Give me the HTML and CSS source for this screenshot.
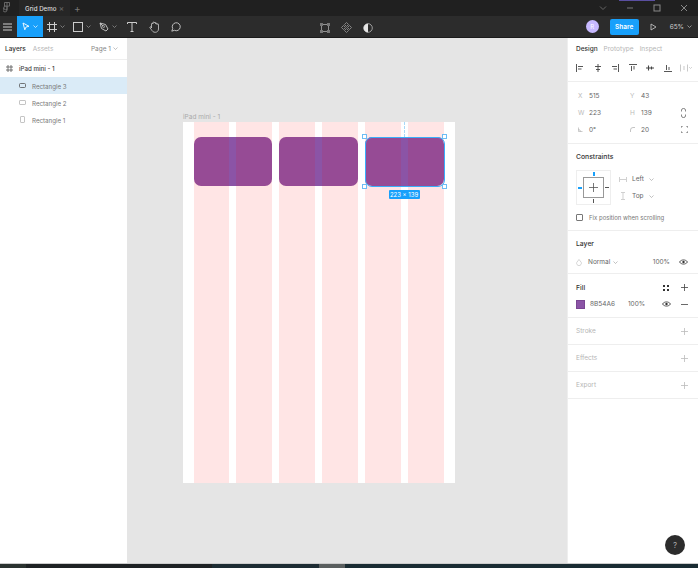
FILE: index.html
```html
<!DOCTYPE html>
<html lang="en">
<head>
    <meta charset="UTF-8" />
    <title>Grid Demo</title>
    <link rel="stylesheet" href="styles.css">
</head>
<body>
<div class="app">
    <div class="titlebar">
        <svg class="figma-mark" width="8" height="12" viewBox="0 0 8 12"><path d="M1.500 .5h5v3.600h-5zM4 .5v7.500a2 2 0 1 1-2.500-2M4 4.100v3.600H2.500A1.800 1.800 0 0 1 2.500 4.100" fill="none" stroke="#777" stroke-width=".8"/></svg>
        <div class="tab"><span>Grid Demo</span><span class="tab-x">×</span></div>
        <span class="tab-plus">+</span>
        <div class="window-btns">
            <svg width="8" height="6" viewBox="0 0 8 6"><path d="M1 1.500l3 3 3-3" fill="none" stroke="#666"/></svg>
            <svg width="8" height="6" viewBox="0 0 8 6"><path d="M1 3h6" stroke="#777"/></svg>
            <svg width="8" height="8" viewBox="0 0 8 8"><rect x="1" y="1" width="6" height="6" fill="none" stroke="#888"/></svg>
            <svg width="8" height="8" viewBox="0 0 8 8"><path d="M1 1l6 6M7 1l-6 6" stroke="#888"/></svg>
        </div>
        <div class="window-accent"></div>
    </div>

    <div class="toolbar">
        <svg class="menu-icon" width="9" height="8" viewBox="0 0 9 8"><path d="M0 1h9M0 4h9M0 7h9" stroke="#ccc"/></svg>
        <div class="tool tool-active">
            <svg width="8" height="9" viewBox="0 0 8 9"><path d="M1 1l6 3.300-3 .7-1.200 2.800z" fill="none" stroke="#fff" stroke-width=".9"/></svg>
            <svg class="caret" width="5" height="3" viewBox="0 0 5 3"><path d="M.5 .5l2 2 2-2" fill="none" stroke="#fff" stroke-width=".7"/></svg>
        </div>
        <div class="tool">
            <svg width="10" height="10" viewBox="0 0 10 10"><path d="M2.500 0v10M7.500 0v10M0 2.500h10M0 7.500h10" stroke="#ccc"/></svg>
            <svg class="caret" width="5" height="3" viewBox="0 0 5 3"><path d="M.5 .5l2 2 2-2" fill="none" stroke="#999" stroke-width=".7"/></svg>
        </div>
        <div class="tool">
            <svg width="10" height="10" viewBox="0 0 10 10"><rect x=".5" y=".5" width="9" height="9" fill="none" stroke="#ccc"/></svg>
            <svg class="caret" width="5" height="3" viewBox="0 0 5 3"><path d="M.5 .5l2 2 2-2" fill="none" stroke="#999" stroke-width=".7"/></svg>
        </div>
        <div class="tool">
            <svg width="10" height="10" viewBox="0 0 10 10"><path d="M1 1l5.500 1.500L9 7 7 9 2.500 6.500zM1 1l3 3" fill="none" stroke="#ccc" stroke-width=".9"/><circle cx="4.600" cy="4.600" r="1" fill="none" stroke="#ccc" stroke-width=".7"/></svg>
            <svg class="caret" width="5" height="3" viewBox="0 0 5 3"><path d="M.5 .5l2 2 2-2" fill="none" stroke="#999" stroke-width=".7"/></svg>
        </div>
        <div class="tool tool-single">
            <svg width="10" height="10" viewBox="0 0 10 10"><path d="M.5 2V.5h9V2M5 .5v9M3.500 9.500h3" fill="none" stroke="#ccc"/></svg>
        </div>
        <div class="tool tool-single">
            <svg width="11" height="12" viewBox="0 0 11 12"><path d="M2.500 7V3a.7.7 0 0 1 1.400 0V1.800a.7.7 0 0 1 1.400 0V2a.7.7 0 0 1 1.400 0v1a.7.7 0 0 1 1.400 0V3.500a.7.7 0 0 1 1.400 0V8c0 2-1.500 3.300-3.300 3.300-2 0-2.800-1-3.700-2.500L.9 6.800c-.4-.8.600-1.400 1.100-.8z" fill="none" stroke="#ccc" stroke-width=".8"/></svg>
        </div>
        <div class="tool tool-single">
            <svg width="10" height="10" viewBox="0 0 10 10"><path d="M.8 9.200l.9-2.600A4 4 0 1 1 3.400 8.300z" fill="none" stroke="#ccc" stroke-width=".9"/></svg>
        </div>
        <div class="center-tools">
            <svg width="10" height="10" viewBox="0 0 10 10"><rect x="1.500" y="1.500" width="7" height="7" fill="none" stroke="#aaa" stroke-width=".8"/><path d="M0 0h3v3H0zM7 0h3v3H7zM0 7h3v3H0zM7 7h3v3H7z" fill="#777"/></svg>
            <svg width="11" height="11" viewBox="0 0 11 11"><path d="M5.500 .5l2 2-2 2-2-2zM5.500 6.500l2 2-2 2-2-2zM2.500 3.500l2 2-2 2-2-2zM8.500 3.500l2 2-2 2-2-2z" fill="none" stroke="#999" stroke-width=".8"/></svg>
            <svg width="10" height="10" viewBox="0 0 10 10"><circle cx="5" cy="5" r="4.300" fill="none" stroke="#bbb" stroke-width=".8"/><path d="M5 .7a4.300 4.300 0 0 0 0 8.600z" fill="#e6e6e6"/></svg>
        </div>
        <div class="right-tools">
            <div class="avatar">R</div>
            <div class="share">Share</div>
            <svg class="play" width="7" height="8" viewBox="0 0 7 8"><path d="M1 1l5 3-5 3z" fill="none" stroke="#ccc" stroke-width=".8"/></svg>
            <div class="zoom-level">65% <svg width="5" height="3" viewBox="0 0 5 3"><path d="M.5 .5l2 2 2-2" fill="none" stroke="#bbb" stroke-width=".7"/></svg></div>
        </div>
    </div>

    <div class="main">
        <div class="left-panel">
            <div class="left-tabs">
                <span class="tab-on">Layers</span>
                <span class="tab-off">Assets</span>
                <span class="page-pick">Page 1 <svg width="5" height="3" viewBox="0 0 5 3"><path d="M.5 .5l2 2 2-2" fill="none" stroke="#999" stroke-width=".6"/></svg></span>
            </div>
            <div class="layer layer-frame">
                <svg width="7" height="7" viewBox="0 0 7 7"><path d="M2 0v7M5 0v7M0 2h7M0 5h7" stroke="#555" stroke-width=".8"/></svg>
                <span>iPad mini - 1</span>
            </div>
            <div class="layer layer-child layer-selected">
                <svg width="7" height="5" viewBox="0 0 7 5"><rect x=".5" y=".5" width="6" height="4" rx="1" fill="none" stroke="#555" stroke-width=".8"/></svg>
                <span>Rectangle 3</span>
            </div>
            <div class="layer layer-child">
                <svg width="7" height="5" viewBox="0 0 7 5"><rect x=".5" y=".5" width="6" height="4" rx=".6" fill="none" stroke="#aaa" stroke-width=".7"/></svg>
                <span>Rectangle 2</span>
            </div>
            <div class="layer layer-child">
                <svg width="7" height="7" viewBox="0 0 7 7"><rect x="1.500" y=".5" width="4" height="6" rx=".6" fill="none" stroke="#aaa" stroke-width=".7"/></svg>
                <span>Rectangle 1</span>
            </div>
        </div>

        <div class="canvas">
            <div class="frame-label">iPad mini - 1</div>
            <div class="frame">
                <div class="rects">
                    <div class="rect"></div>
                    <div class="rect"></div>
                    <div class="rect"></div>
                </div>
                <div class="columns">
                    <div class="col"></div><div class="col"></div><div class="col"></div>
                    <div class="col"></div><div class="col"></div><div class="col"></div>
                </div>
                <div class="guide"></div>
                <div class="selection">
                    <i class="handle h-tl"></i><i class="handle h-tr"></i>
                    <i class="handle h-bl"></i><i class="handle h-br"></i>
                    <div class="size-badge">223 × 139</div>
                </div>
            </div>
            <div class="help">?</div>
        </div>

        <div class="right-panel">
            <div class="design-head">
                <div class="right-tabs">
                    <span class="tab-on">Design</span>
                    <span class="tab-off">Prototype</span>
                    <span class="tab-off">Inspect</span>
                </div>
                <div class="align-row">
                    <svg width="8" height="8" viewBox="0 0 8 8"><path d="M.5 0v8M2 2.500h5M2 5h3.500" stroke="#444" stroke-width=".9"/></svg>
                    <svg width="8" height="8" viewBox="0 0 8 8"><path d="M4 0v8M1 2.500h6M2 5.500h4" stroke="#444" stroke-width=".9"/></svg>
                    <svg width="8" height="8" viewBox="0 0 8 8"><path d="M7.500 0v8M1 2.500h5M2.500 5H6" stroke="#444" stroke-width=".9"/></svg>
                    <svg width="8" height="8" viewBox="0 0 8 8"><path d="M0 .5h8M2.500 2v5M5 2v3.500" stroke="#444" stroke-width=".9"/></svg>
                    <svg width="8" height="8" viewBox="0 0 8 8"><path d="M0 4h8M2.500 1.500v5M5.500 2.500v3" stroke="#444" stroke-width="1.100"/></svg>
                    <svg width="8" height="8" viewBox="0 0 8 8"><path d="M0 7.500h8M2.500 1v5M5 3v3" stroke="#444" stroke-width=".9"/></svg>
                    <svg class="align-more" width="12" height="8" viewBox="0 0 12 8"><path d="M.5 .5v7M7.500 .5v7M4 2v4" stroke="#bbb" stroke-width=".8"/><path d="M9 3l1.500 1.500L12 3" fill="none" stroke="#bbb" stroke-width=".6"/></svg>
                </div>
            </div>

            <div class="section props">
                <div class="prop"><b>X</b><span>515</span></div>
                <div class="prop"><b>Y</b><span>43</span></div>
                <i></i>
                <div class="prop"><b>W</b><span>223</span></div>
                <div class="prop"><b>H</b><span>139</span></div>
                <svg class="prop-action" width="5" height="10" viewBox="0 0 5 10"><path d="M.5 3.500V2a2 1.500 0 0 1 4 0v1.500M.5 6.500V8a2 1.500 0 0 0 4 0V6.500" fill="none" stroke="#555" stroke-width=".7"/></svg>
                <div class="prop"><b><svg width="5" height="5" viewBox="0 0 5 5"><path d="M.5 .5v4h4M.5 2.500a2 2 0 0 1 2 2" fill="none" stroke="#aaa" stroke-width=".6"/></svg></b><span>0°</span></div>
                <div class="prop"><b><svg width="5" height="5" viewBox="0 0 5 5"><path d="M.5 5V3a2.500 2.500 0 0 1 2.500-2.500h2" fill="none" stroke="#aaa" stroke-width=".7"/></svg></b><span>20</span></div>
                <svg class="prop-action" width="7" height="7" viewBox="0 0 7 7"><path d="M0 2V0h2M5 0h2v2M7 5v2H5M2 7H0V5" fill="none" stroke="#555" stroke-width=".8"/></svg>
            </div>

            <div class="section constraints">
                <div class="section-title">Constraints</div>
                <div class="constraint-body">
                    <div class="constraint-box">
                        <div class="constraint-inner">
                            <svg width="9" height="9" viewBox="0 0 9 9"><path d="M4.500 0v9M0 4.500h9" stroke="#555" stroke-width=".8"/></svg>
                        </div>
                        <i class="pin pin-top"></i><i class="pin pin-left"></i>
                        <i class="pin pin-right"></i><i class="pin pin-bottom"></i>
                    </div>
                    <div class="constraint-picks">
                        <div class="pick">
                            <svg width="8" height="5" viewBox="0 0 8 5"><path d="M.5 0v5M7.500 0v5M1 2.500h6" stroke="#bbb" stroke-width=".7"/></svg>
                            <span>Left</span>
                            <svg width="5" height="3" viewBox="0 0 5 3"><path d="M.5 .5l2 2 2-2" fill="none" stroke="#999" stroke-width=".6"/></svg>
                        </div>
                        <div class="pick">
                            <svg width="8" height="8" viewBox="0 0 8 8"><path d="M2 .5h4M2 7.500h4M4 1v6" stroke="#bbb" stroke-width=".7"/></svg>
                            <span>Top</span>
                            <svg width="5" height="3" viewBox="0 0 5 3"><path d="M.5 .5l2 2 2-2" fill="none" stroke="#999" stroke-width=".6"/></svg>
                        </div>
                    </div>
                </div>
                <div class="fix-row"><i class="checkbox"></i><span>Fix position when scrolling</span></div>
            </div>

            <div class="section layer-sec">
                <div class="section-title">Layer</div>
                <div class="value-row">
                    <svg width="6" height="7" viewBox="0 0 6 7"><path d="M3 .5L5.300 3.500a2.400 2.400 0 1 1-4.600 0z" fill="none" stroke="#bbb" stroke-width=".6"/></svg>
                    <span class="blend">Normal</span>
                    <svg class="blend-caret" width="5" height="3" viewBox="0 0 5 3"><path d="M.5 .5l2 2 2-2" fill="none" stroke="#999" stroke-width=".6"/></svg>
                    <span class="percent">100%</span>
                    <svg class="eye" width="9" height="6" viewBox="0 0 9 6"><path d="M.4 3C2.500 .2 6.500 .2 8.600 3 6.500 5.800 2.500 5.800 .4 3z" fill="none" stroke="#333" stroke-width=".8"/><circle cx="4.500" cy="3" r="1.200" fill="#333"/></svg>
                </div>
            </div>

            <div class="section fill-sec">
                <div class="section-head">
                    <span class="section-title">Fill</span>
                    <svg class="styles-icon" width="6" height="6" viewBox="0 0 6 6"><path d="M0 0h2v2H0zM4 0h2v2H4zM0 4h2v2H0zM4 4h2v2H4z" fill="#333"/></svg>
                    <svg width="7" height="7" viewBox="0 0 7 7"><path d="M3.500 0v7M0 3.500h7" stroke="#444" stroke-width=".8"/></svg>
                </div>
                <div class="value-row">
                    <i class="swatch"></i>
                    <span class="hex">8B54A6</span>
                    <span class="fill-percent">100%</span>
                    <svg class="eye" width="9" height="6" viewBox="0 0 9 6"><path d="M.4 3C2.500 .2 6.500 .2 8.600 3 6.500 5.800 2.500 5.800 .4 3z" fill="none" stroke="#333" stroke-width=".8"/><circle cx="4.500" cy="3" r="1.200" fill="#333"/></svg>
                    <svg width="7" height="7" viewBox="0 0 7 7"><path d="M0 3.500h7" stroke="#444" stroke-width=".8"/></svg>
                </div>
            </div>

            <div class="section empty-sec">
                <span>Stroke</span>
                <svg width="7" height="7" viewBox="0 0 7 7"><path d="M3.500 0v7M0 3.500h7" stroke="#bbb" stroke-width=".8"/></svg>
            </div>
            <div class="section empty-sec">
                <span>Effects</span>
                <svg width="7" height="7" viewBox="0 0 7 7"><path d="M3.500 0v7M0 3.500h7" stroke="#bbb" stroke-width=".8"/></svg>
            </div>
            <div class="section empty-sec">
                <span>Export</span>
                <svg width="7" height="7" viewBox="0 0 7 7"><path d="M3.500 0v7M0 3.500h7" stroke="#bbb" stroke-width=".8"/></svg>
            </div>
        </div>
    </div>

    <div class="taskbar">
        <div class="task task-first"></div>
        <div class="task task-wide"></div>
        <div class="task task-narrow"></div>
        <div class="task task-on"></div>
        <div class="task task-rest"></div>
    </div>
</div>
</body>
</html>
```

FILE: styles.css
```css
body {
    margin: 0;
    font-family: Inter, "Liberation Sans", sans-serif;
    font-size: 6.5px;
    color: #333;
}

.app {
    display: flex;
    flex-direction: column;
    width: 698px;
    height: 568px;
    overflow: hidden;
}

svg {
    display: block;
    flex: none;
}

/* title bar */
.titlebar {
    display: flex;
    align-items: center;
    height: 16px;
    background-color: #202020;
    position: relative;
    color: #ddd;
}

.figma-mark {
    margin-left: 3px;
}

.tab {
    display: flex;
    align-items: center;
    justify-content: space-between;
    box-sizing: border-box;
    width: 51px;
    height: 16px;
    margin-left: 8px;
    padding: 0 6px 0 6px;
    background-color: #262626;
    font-size: 6.2px;
    font-weight: 500;
    white-space: nowrap;
}

.tab-x {
    color: #666;
    font-size: 8px;
}

.tab-plus {
    margin-left: 4px;
    color: #777;
    font-size: 10px;
}

.window-btns {
    display: flex;
    align-items: center;
    gap: 19px;
    margin-left: auto;
    margin-right: 10px;
}

.window-accent {
    position: absolute;
    top: 0;
    left: 619px;
    width: 36px;
    height: 1px;
    background-color: #5a4fa0;
}

/* toolbar */
.toolbar {
    display: flex;
    align-items: center;
    height: 21px;
    background-color: #2c2c2c;
    border-bottom: 1px solid #1b1b1b;
    position: relative;
}

.menu-icon {
    margin: 0 5px 0 3px;
}

.tool {
    display: flex;
    align-items: center;
    justify-content: center;
    gap: 3px;
    width: 26px;
    height: 21px;
}

.tool-single {
    width: 22px;
}

.tool-active {
    background-color: #18a0fb;
}

.center-tools {
    display: flex;
    align-items: center;
    gap: 11px;
    position: absolute;
    left: 320px;
    top: 6px;
}

.right-tools {
    display: flex;
    align-items: center;
    margin-left: auto;
    margin-right: 6px;
}

.avatar {
    width: 13px;
    height: 13px;
    line-height: 13px;
    border-radius: 50%;
    background-color: #c7b9ff;
    color: #fff;
    text-align: center;
    font-size: 6px;
}

.share {
    width: 29px;
    height: 16px;
    line-height: 16px;
    margin-left: 11px;
    border-radius: 2px;
    background-color: #18a0fb;
    color: #fff;
    text-align: center;
    font-weight: 600;
}

.play {
    margin-left: 11px;
}

.zoom-level {
    display: flex;
    align-items: center;
    gap: 3px;
    margin-left: 13px;
    color: #ccc;
}

/* left panel */
.main {
    display: flex;
    flex: 1;
    min-height: 0;
}

.left-panel {
    width: 127px;
    background-color: #fff;
    flex: none;
}

.left-tabs {
    display: flex;
    align-items: center;
    gap: 7px;
    height: 21px;
    padding: 0 9px 0 5px;
    border-bottom: 1px solid #eee;
}

.tab-on {
    color: #333;
    font-weight: 500;
}

.tab-off {
    color: #b5b5b5;
}

.page-pick {
    display: flex;
    align-items: center;
    gap: 2px;
    margin-left: auto;
    color: #888;
}

.layer {
    display: flex;
    align-items: center;
    gap: 6px;
    height: 17px;
    padding-left: 6px;
    font-size: 6.2px;
    color: #777;
}

.layer-child span {
    margin-top: 1px;
}

.layer-frame {
    color: #444;
    font-weight: 500;
}

.layer-child {
    padding-left: 19px;
}

.layer-selected {
    background-color: #daebf7;
}

/* canvas */
.canvas {
    flex: 1;
    background-color: #e5e5e5;
    position: relative;
}

.frame-label {
    position: absolute;
    left: 56px;
    top: 75px;
    color: #aaa;
}

.frame {
    position: absolute;
    left: 56px;
    top: 84px;
    width: 271.5px;
    height: 361px;
    background-color: #fff;
}

.rects {
    position: absolute;
    top: 15px;
    left: 10.5px;
    right: 10.5px;
    display: grid;
    grid-template-columns: repeat(3, 1fr);
    gap: 7px;
}

.rect {
    height: 49px;
    border-radius: 7px;
    background-color: #8b54a6;
}

.columns {
    position: absolute;
    top: 0;
    bottom: 0;
    left: 10.5px;
    right: 10.5px;
    display: flex;
    gap: 7px;
}

.col {
    flex: 1;
    background-color: rgba(255, 0, 0, 0.1);
}

.guide {
    position: absolute;
    left: 221px;
    top: 0;
    height: 15px;
    border-left: 1px dashed #a9d9f8;
}

.selection {
    position: absolute;
    left: 181.5px;
    top: 14.5px;
    width: 80px;
    height: 50px;
    box-sizing: border-box;
    border: 1.5px solid #3aaefb;
    border-radius: 7px;
}

.handle {
    position: absolute;
    width: 5px;
    height: 5px;
    background-color: #fff;
    border: 1px solid #6cbdf5;
    box-sizing: border-box;
}

.h-tl { left: -3.5px; top: -3.5px; }
.h-tr { right: -3.5px; top: -3.5px; }
.h-bl { left: -3.5px; bottom: -3.5px; }
.h-br { right: -3.5px; bottom: -3.5px; }

.size-badge {
    position: absolute;
    left: 23px;
    top: 52px;
    width: 31px;
    height: 9px;
    line-height: 9px;
    border-radius: 1px;
    background-color: #18a0fb;
    color: #fff;
    text-align: center;
    font-size: 6px;
    white-space: nowrap;
}

.help {
    position: absolute;
    left: 538px;
    top: 497px;
    width: 20px;
    height: 20px;
    line-height: 20px;
    border-radius: 50%;
    background-color: #2c2c2c;
    color: #aaa;
    text-align: center;
    font-size: 8px;
    z-index: 2;
}

/* right panel */
.right-panel {
    width: 131px;
    flex: none;
    background-color: #fff;
    border-left: 1px solid #eee;
    box-sizing: border-box;
}

.design-head {
    height: 44px;
    border-bottom: 1px solid #eee;
    box-sizing: border-box;
}

.right-tabs {
    display: flex;
    align-items: center;
    gap: 6px;
    height: 22px;
    padding-left: 8px;
}

.align-row {
    display: flex;
    align-items: center;
    gap: 9.5px;
    height: 16px;
    padding-left: 8px;
}

.align-more {
    margin-left: -1px;
}

.section {
    border-bottom: 1px solid #eee;
    box-sizing: border-box;
}

.section-title {
    color: #333;
    font-weight: 500;
    font-size: 6.8px;
}

.props {
    display: grid;
    grid-template-columns: 52px 46px 1fr;
    grid-auto-rows: 17px;
    align-items: center;
    height: 62px;
    padding: 5px 0 0 10px;
}

.prop {
    display: flex;
    align-items: center;
    gap: 6px;
    color: #666;
}

.prop b {
    width: 5px;
    color: #bbb;
    font-weight: 400;
}

.prop-action {
    margin-left: 5px;
}

.constraints {
    height: 87px;
    padding: 8px 0 0 8px;
}

.constraint-body {
    display: flex;
    margin-top: 9px;
}

.constraint-box {
    position: relative;
    display: flex;
    align-items: center;
    justify-content: center;
    width: 35px;
    height: 35px;
    box-sizing: border-box;
    border: 1px solid #eee;
}

.constraint-inner {
    display: flex;
    align-items: center;
    justify-content: center;
    width: 21px;
    height: 21px;
    box-sizing: border-box;
    border: 1px solid #999;
}

.pin {
    position: absolute;
    background-color: #555;
}

.pin-top { top: 1px; left: 16px; width: 1.5px; height: 4px; background-color: #18a0fb; }
.pin-bottom { bottom: 1px; left: 16px; width: 1px; height: 4px; }
.pin-left { left: 1px; top: 16px; width: 4px; height: 1.5px; background-color: #18a0fb; }
.pin-right { right: 1px; top: 16px; width: 4px; height: 1px; }

.constraint-picks {
    display: flex;
    flex-direction: column;
    gap: 9px;
    margin: 5px 0 0 8px;
}

.pick {
    display: flex;
    align-items: center;
    gap: 5px;
    height: 8px;
    color: #666;
}

.fix-row {
    display: flex;
    align-items: center;
    gap: 6px;
    margin-top: 9px;
    font-size: 6px;
    color: #777;
}

.checkbox {
    width: 5px;
    height: 5px;
    border: 1px solid #777;
    border-radius: 1px;
}

.layer-sec {
    height: 43px;
    padding: 8px 10px 0 8px;
}

.layer-sec .value-row {
    margin-top: 9px;
}

.value-row {
    display: flex;
    align-items: center;
    height: 10px;
    margin-top: 7px;
    color: #666;
}

.blend {
    margin-left: 6px;
}

.blend-caret {
    margin-left: 3px;
}

.percent {
    margin-left: auto;
    margin-right: 9px;
}

.fill-sec {
    height: 44px;
    padding: 9px 10px 0 8px;
}

.section-head {
    display: flex;
    align-items: center;
}

.styles-icon {
    margin-left: auto;
    margin-right: 12px;
}

.swatch {
    width: 9px;
    height: 9px;
    background-color: #8b54a6;
    border: 0.5px solid #7a4693;
    box-sizing: border-box;
}

.hex {
    margin-left: 5px;
}

.fill-percent {
    margin-left: 13px;
}

.fill-sec .eye {
    margin-left: auto;
    margin-right: 10px;
}

.empty-sec {
    display: flex;
    align-items: center;
    justify-content: space-between;
    height: 27px;
    padding: 0 10px 0 8px;
    color: #b5b5b5;
}

/* bottom strip */
.taskbar {
    display: flex;
    height: 5px;
    flex: none;
    background-color: #1c2a2e;
    border-top: 1px solid #ccc;
    box-sizing: border-box;
}

.task-first { width: 26px; background-color: #2b3330; }
.task-wide { width: 186px; background-color: #1e2224; }
.task-narrow { width: 107px; background-color: #1d2c33; }
.task-on { width: 26px; background-color: #5a5f5f; }
.task-rest { flex: 1; background-color: #1a2c33; }
```
